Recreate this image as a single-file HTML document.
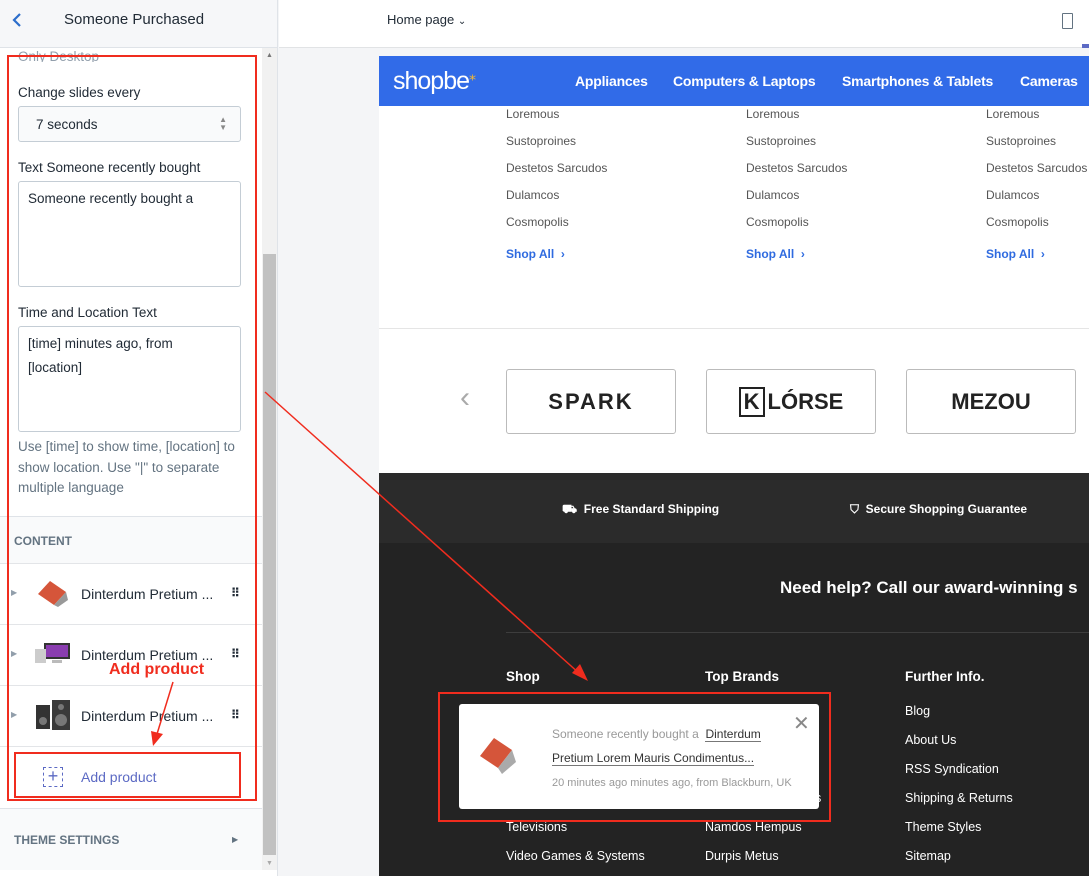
<!DOCTYPE html>
<html><head><meta charset="utf-8"><style>
*{box-sizing:border-box;margin:0;padding:0}
body{width:1089px;height:876px;overflow:hidden;font-family:"Liberation Sans",sans-serif;background:#f4f5f7;position:relative;color:#212b36}
.a{position:absolute}
.lbl{font-size:13.5px;color:#212b36}
.nv{position:absolute;top:17px;color:#fff;font-weight:bold;font-size:14px;white-space:nowrap;letter-spacing:-0.2px}
.col div{font-size:12px;color:#555;height:27px}
.col .sa{color:#2f6be0;font-weight:bold;margin-top:5px}
.brand{border:1px solid #bbb;border-radius:3px;width:170px;height:65px;background:#fff;display:flex;align-items:center;justify-content:center;font-weight:bold;font-size:22px;color:#222}
.fc div{color:#fff;font-size:12.5px;height:29px}
.fc .h{font-weight:bold;font-size:13.5px;height:35px}
.item{position:absolute;left:0;width:262px;height:61px;border-top:1px solid #e3e5e8;background:#fff;font-size:14px}
</style></head><body>
<!-- left header -->
<div class="a" style="left:0;top:0;width:278px;height:48px;background:#f6f7f9;border-right:1px solid #dfe3e8;border-bottom:1px solid #dfe3e8"></div>
<svg class="a" style="left:11px;top:12px" width="12" height="16"><path d="M9 2 L3 8 L9 14" fill="none" stroke="#2c6ecb" stroke-width="2.2"/></svg>
<div class="a" style="left:64px;top:11px;font-size:15px;color:#212b36">Someone Purchased</div>
<!-- top right bar -->
<div class="a" style="left:279px;top:0;width:810px;height:48px;background:#fff;border-bottom:1px solid #e1e3e5"></div>
<div class="a" style="left:387px;top:12px;font-size:13px;color:#212b36">Home page <span style="font-size:10px">&#8964;</span></div>
<div class="a" style="left:1062px;top:13px;width:11px;height:16px;border:1.5px solid #637381;border-radius:1px"></div>
<div class="a" style="left:1082px;top:44px;width:7px;height:4px;background:#5c6ac4"></div>
<!-- left panel body -->
<div class="a" style="left:0;top:48px;width:278px;height:828px;background:#fff;border-right:1px solid #dfe3e8"></div>
<div class="a" style="left:262px;top:48px;width:15px;height:822px;background:#f1f1f1"></div>
<div class="a" style="left:263px;top:254px;width:13px;height:601px;background:#c1c1c1"></div>
<div class="a" style="left:266px;top:52px;font-size:7px;color:#777">▲</div>
<div class="a" style="left:266px;top:860px;font-size:7px;color:#aaa">▼</div>
<div class="a" style="left:0;top:48px;width:260px;height:14px;overflow:hidden"><div style="position:absolute;left:18px;top:1px;font-size:13.5px;color:#919eab">Only Desktop</div></div>
<div class="a lbl" style="left:18px;top:85px">Change slides every</div>
<div class="a" style="left:18px;top:106px;width:223px;height:36px;border:1px solid #c4cdd5;border-radius:3px;background:#f9fafb;font-size:13.5px;padding:10px 0 0 17px">7 seconds<span style="position:absolute;right:13px;top:9px;font-size:8px;color:#888;line-height:8px">▲<br>▼</span></div>
<div class="a lbl" style="left:18px;top:160px">Text Someone recently bought</div>
<div class="a" style="left:18px;top:181px;width:223px;height:106px;border:1px solid #c4cdd5;border-radius:3px;font-size:13.5px;padding:9px 9px">Someone recently bought a</div>
<div class="a lbl" style="left:18px;top:305px">Time and Location Text</div>
<div class="a" style="left:18px;top:326px;width:223px;height:106px;border:1px solid #c4cdd5;border-radius:3px;font-size:13.5px;padding:5px 50px 0 9px;line-height:24px">[time] minutes ago, from [location]</div>
<div class="a" style="left:18px;top:437px;width:225px;font-size:13.5px;color:#637381;line-height:20.5px">Use [time] to show time, [location] to show location. Use "|" to separate multiple language</div>
<div class="a" style="left:0;top:516px;width:262px;height:47px;background:#f9fafb;border-top:1px solid #dfe3e8"></div>
<div class="a" style="left:14px;top:534px;font-size:12px;font-weight:bold;color:#637381">CONTENT</div>
<div class="item" style="top:563px"></div><div class="item" style="top:624px"></div><div class="item" style="top:685px"></div><div class="item" style="top:746px;height:56px"></div>
<div class="a" style="left:11px;top:588px;font-size:8px;color:#919eab">▶</div>
<div class="a" style="left:11px;top:649px;font-size:8px;color:#919eab">▶</div>
<div class="a" style="left:11px;top:710px;font-size:8px;color:#919eab">▶</div>
<svg class="a" style="left:36px;top:580px" width="34" height="28"><polygon points="2,14 14,1 30,12 18,25" fill="#d5553a"/><polygon points="18,25 30,12 32,20 22,27" fill="#999"/></svg>
<svg class="a" style="left:34px;top:641px" width="38" height="26"><rect x="10" y="2" width="26" height="16" fill="#333"/><rect x="12" y="4" width="22" height="12" fill="#8a3db0"/><rect x="1" y="8" width="11" height="14" fill="#ccc"/><rect x="18" y="19" width="10" height="3" fill="#bbb"/></svg>
<svg class="a" style="left:34px;top:699px" width="38" height="32"><rect x="2" y="6" width="14" height="24" fill="#333"/><circle cx="9" cy="22" r="4" fill="#777"/><rect x="18" y="1" width="18" height="30" fill="#3a3a3a"/><circle cx="27" cy="21" r="6" fill="#777"/><circle cx="27" cy="8" r="3" fill="#777"/></svg>
<div class="a" style="left:81px;top:586px;font-size:14px">Dinterdum Pretium ...</div>
<div class="a" style="left:81px;top:647px;font-size:14px">Dinterdum Pretium ...</div>
<div class="a" style="left:81px;top:708px;font-size:14px">Dinterdum Pretium ...</div>
<div class="a" style="left:231px;top:586px;font-size:12px;font-weight:bold">⠿</div>
<div class="a" style="left:231px;top:647px;font-size:12px;font-weight:bold">⠿</div>
<div class="a" style="left:231px;top:708px;font-size:12px;font-weight:bold">⠿</div>
<div class="a" style="left:43px;top:767px;width:20px;height:20px;border:1.5px dashed #5c6ac4;color:#5c6ac4;font-size:18px;line-height:16px;text-align:center">+</div>
<div class="a" style="left:81px;top:769px;font-size:14px;color:#5c6ac4">Add product</div>
<div class="a" style="left:0;top:808px;width:262px;height:62px;background:#f9fafb;border-top:1px solid #dfe3e8"></div>
<div class="a" style="left:14px;top:833px;font-size:12px;font-weight:bold;color:#637381">THEME SETTINGS</div>
<div class="a" style="left:232px;top:835px;font-size:8px;color:#637381">▶</div>
<!-- preview -->
<div class="a" style="left:379px;top:56px;width:710px;height:820px;background:#fff;overflow:hidden">
 <div class="a" style="left:0;top:0;width:710px;height:50px;background:#316be8"></div>
 <div class="a" style="left:14px;top:11px;font-size:25px;color:#fff;letter-spacing:-1px">shopbe<span style="color:#f5b833;font-size:14px;vertical-align:top">⁎</span></div>
 <div class="nv" style="left:196px">Appliances</div>
 <div class="nv" style="left:294px">Computers &amp; Laptops</div>
 <div class="nv" style="left:463px">Smartphones &amp; Tablets</div>
 <div class="nv" style="left:641px">Cameras</div>
 <div class="a col" style="left:127px;top:51px"><div>Loremous</div><div>Sustoproines</div><div>Destetos Sarcudos</div><div>Dulamcos</div><div>Cosmopolis</div><div class="sa">Shop All &nbsp;›</div></div>
 <div class="a col" style="left:367px;top:51px"><div>Loremous</div><div>Sustoproines</div><div>Destetos Sarcudos</div><div>Dulamcos</div><div>Cosmopolis</div><div class="sa">Shop All &nbsp;›</div></div>
 <div class="a col" style="left:607px;top:51px;white-space:nowrap"><div>Loremous</div><div>Sustoproines</div><div>Destetos Sarcudos</div><div>Dulamcos</div><div>Cosmopolis</div><div class="sa">Shop All &nbsp;›</div></div>
 <div class="a" style="left:0;top:272px;width:710px;height:1px;background:#e5e5e5"></div>
 <div class="a" style="left:81px;top:325px;font-size:30px;color:#aaa;font-weight:100">‹</div>
 <div class="a brand" style="left:127px;top:313px;letter-spacing:2px">SPARK</div>
 <div class="a brand" style="left:327px;top:313px"><span style="border:2px solid #222;padding:0 3px;margin-right:3px">K</span>LÓRSE</div>
 <div class="a brand" style="left:527px;top:313px">MEZOU</div>
 <div class="a" style="left:0;top:417px;width:710px;height:70px;background:#2b2b2b"></div>
 <div class="a" style="left:183px;top:446px;color:#fff;font-size:12px;font-weight:bold">⛟ &nbsp;Free Standard Shipping</div>
 <div class="a" style="left:471px;top:446px;color:#fff;font-size:12px;font-weight:bold">⛉ &nbsp;Secure Shopping Guarantee</div>
 <div class="a" style="left:0;top:487px;width:710px;height:333px;background:#232323"></div>
 <div class="a" style="left:401px;top:522px;color:#fff;font-size:17px;font-weight:bold;white-space:nowrap">Need help? Call our award-winning s</div>
 <div class="a" style="left:127px;top:576px;width:583px;height:1px;background:#3d3d3d"></div>
 <div class="a fc" style="left:127px;top:613px"><div class="h">Shop</div><div></div><div></div><div></div><div></div><div>Televisions</div><div>Video Games &amp; Systems</div></div>
 <div class="a fc" style="left:326px;top:613px"><div class="h">Top Brands</div><div></div><div></div><div></div><div style="padding-left:110px">s</div><div>Namdos Hempus</div><div>Durpis Metus</div></div>
 <div class="a fc" style="left:526px;top:613px"><div class="h">Further Info.</div><div>Blog</div><div>About Us</div><div>RSS Syndication</div><div>Shipping &amp; Returns</div><div>Theme Styles</div><div>Sitemap</div></div>
 <div class="a" style="left:80px;top:648px;width:360px;height:105px;background:#fff;border-radius:3px"></div>
 <svg class="a" style="left:99px;top:680px" width="48" height="42"><polygon points="2,20 16,2 34,14 20,32" fill="#d5553a"/><polygon points="20,32 34,14 38,26 24,38" fill="#aaa"/></svg>
 <div class="a" style="left:173px;top:666px;font-size:12px;color:#999;line-height:24px;width:240px">Someone recently bought a &nbsp;<span style="color:#333;border-bottom:1px solid #777">Dinterdum</span><br><span style="color:#333;border-bottom:1px solid #777">Pretium Lorem Mauris Condimentus...</span></div>
 <div class="a" style="left:173px;top:721px;font-size:11px;color:#999">20 minutes ago minutes ago, from Blackburn, UK</div>
 <div class="a" style="left:414px;top:655px;font-size:20px;color:#888">✕</div>
</div>
<!-- annotations -->
<div class="a" style="left:7px;top:55px;width:250px;height:746px;border:2px solid #f02c1e"></div>
<div class="a" style="left:14px;top:752px;width:227px;height:46px;border:2px solid #f02c1e"></div>
<div class="a" style="left:438px;top:692px;width:393px;height:130px;border:2px solid #f02c1e"></div>
<div class="a" style="left:109px;top:661px;color:#f02c1e;font-size:16px;font-weight:bold">Add product</div>
<svg class="a" style="left:0;top:0" width="1089" height="876"><line x1="265" y1="392" x2="580" y2="674" stroke="#f02c1e" stroke-width="1.5"/><polygon points="588,681 572,673 580,664" fill="#f02c1e"/><line x1="173" y1="682" x2="157" y2="734" stroke="#f02c1e" stroke-width="1.5"/><polygon points="153,746 151,731 163,734" fill="#f02c1e"/></svg>
</body></html>
